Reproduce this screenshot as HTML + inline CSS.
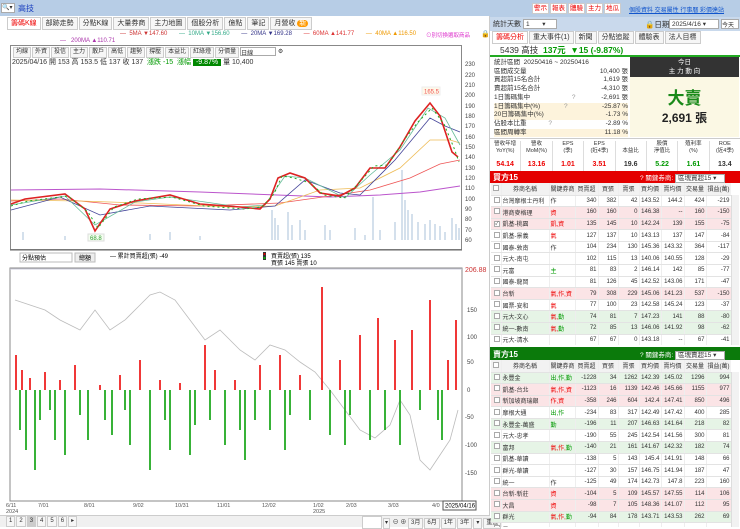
<!DOCTYPE html><html><head><meta charset="utf-8"><style>
*{box-sizing:border-box;margin:0;padding:0}
body{width:740px;height:527px;overflow:hidden;background:#fff;font-family:"Liberation Sans","Noto Sans CJK TC",sans-serif;font-size:7px;color:#333;position:relative}
.a{position:absolute}
.tab{display:inline-block;border:1px solid #ccc;background:#f6f6f6;padding:1px 3px;margin-right:1px;font-size:7px;line-height:9px}
table{border-collapse:collapse;width:240px;table-layout:fixed}
td{border-bottom:1px solid #e3e3e3;border-right:1px solid #eee;font-size:6px;height:11.6px;padding:0 1px;text-align:right;white-space:nowrap;overflow:hidden}
td:nth-child(2),td:nth-child(3){text-align:left}
tr.h td{background:#f2f2f2;text-align:center;height:12px}
tr.p td{background:#fbe4e6}tr.g td{background:#e6f4e6}
.r{color:#e00}.gr{color:#090}
.cb{display:inline-block;width:6px;height:6px;border:1px solid #aaa;background:#fff;font-size:5px;line-height:5px}
.sb{display:inline-block;border:1px solid #ccc;background:#fff;color:#e00;font-size:6.5px;line-height:9px;width:17px;text-align:center;margin-right:1px}
</style></head><body>
<div class="a" style="left:0;top:0;width:490px;height:16px;background:#b7cde6"></div>
<div class="a" style="left:1px;top:3px;width:14px;height:10px;background:#fff;border:1px solid #aaa;font-size:6px">🔍▾</div>
<div class="a" style="left:18px;top:3px;color:#1a3fbf;font-size:8px">高技</div>
<div class="a" style="left:0;top:16px;width:490px;height:499px;background:#fff;border-right:1px solid #ccc"></div>
<div class="a" style="left:7px;top:17px;white-space:nowrap"><span class="tab" style="color:#e00;background:#fff">籌碼K線</span><span class="tab">部跡走勢</span><span class="tab">分點K線</span><span class="tab">大量券商</span><span class="tab">主力地圖</span><span class="tab">個股分析</span><span class="tab">億點</span><span class="tab">筆記</span><span class="tab">月營收 <span style="background:#f90;color:#fff;border-radius:4px;padding:0 2px">新</span></span></div>
<div class="a" style="left:120px;top:31px;font-size:6px;white-space:nowrap;color:#c33">— &nbsp;5MA ▼147.60 &nbsp; &nbsp; &nbsp; <span style="color:#3a8">— &nbsp;10MA ▼156.60</span> &nbsp; &nbsp; &nbsp; <span style="color:#338">— &nbsp;20MA ▼169.28</span> &nbsp; &nbsp; &nbsp; <span style="color:#d33">— &nbsp;60MA ▲141.77</span> &nbsp; &nbsp; &nbsp; <span style="color:#e90">— &nbsp;40MA ▲116.50</span></div>
<div class="a" style="left:60px;top:38px;font-size:6px;color:#a3a">— &nbsp; 200MA ▲110.71</div>
<div class="a" style="left:426px;top:31px;font-size:5.5px;color:#d3c">⊙別切換選取商品</div>
<div class="a" style="left:481px;top:30px;font-size:7px">🔒</div>
<div class="a" style="left:10px;top:45px;width:452px;height:205px;border:1px solid #888"></div>
<div class="a" style="left:13px;top:47px;white-space:nowrap;font-size:6px"><span class="tab" style="font-size:6px;padding:0 2px">均線</span><span class="tab" style="font-size:6px;padding:0 2px">外資</span><span class="tab" style="font-size:6px;padding:0 2px">投信</span><span class="tab" style="font-size:6px;padding:0 2px">主力</span><span class="tab" style="font-size:6px;padding:0 2px">散戶</span><span class="tab" style="font-size:6px;padding:0 2px">高低</span><span class="tab" style="font-size:6px;padding:0 2px">趨勢</span><span class="tab" style="font-size:6px;padding:0 2px">撐壓</span><span class="tab" style="font-size:6px;padding:0 2px">本益比</span><span class="tab" style="font-size:6px;padding:0 2px">紅綠燈</span><span class="tab" style="font-size:6px;padding:0 2px">分價量</span><span style="display:inline-block;border:1px solid #aaa;width:36px;height:9px;vertical-align:top">日線</span> ⚙</div>
<div class="a" style="left:12px;top:57px;font-size:7px;white-space:nowrap">2025/04/16 開 153 高 153.5 低 137 收 137 &nbsp;<span class="gr">漲跌 -15 &nbsp;漲幅</span> <span style="background:#080;color:#fff;padding:0 3px">-9.87%</span> 量 10,400</div>
<svg class="a" style="left:0;top:45px" width="490" height="470" viewBox="0 45 490 470">
<g font-size="6" fill="#444"><text x="465" y="66">230</text><text x="465" y="77">220</text><text x="465" y="87">210</text><text x="465" y="97">200</text><text x="465" y="108">190</text><text x="465" y="118">180</text><text x="465" y="128">170</text><text x="465" y="139">160</text><text x="465" y="149">150</text><text x="465" y="159">140</text><text x="465" y="170">130</text><text x="465" y="180">120</text><text x="465" y="190">110</text><text x="465" y="201">100</text><text x="465" y="211">90</text><text x="465" y="221">80</text><text x="465" y="232">70</text><text x="465" y="242">60</text></g>
<g stroke="#b7cbe0" stroke-width="1.2">
<path d="M23 240V232M65 240V236M100 240V235M150 240V234M170 240V232M200 240V236M272 240V210M275 240V218M278 240V225M288 240V212M292 240V225M300 240V220M305 240V230M325 240V225M330 240V230M355 240V228M365 240V235M373 240V197M380 240V230M395 240V222M402 240V170M405 240V200M408 240V210M412 240V214M418 240V222M425 240V224M430 240V220M435 240V224M440 240V226M445 240V232M452 240V218M456 240V224M459 240V228"/></g>
<path d="M11 190L100 189L200 192L330 197L380 195L420 192L460 186" fill="none" stroke="#b5c" stroke-width="1"/>
<path d="M11 201L60 199L120 205L200 206L280 203L330 196L370 190L410 178L440 164L460 160" fill="none" stroke="#e55" stroke-width="0.8"/>
<path d="M11 200L80 201L140 203L230 207L275 206L320 190L360 188L400 168L430 140L450 140L460 143" fill="none" stroke="#eb5" stroke-width="0.8"/>
<path d="M11 210L60 197L100 215L150 206L230 210L275 206L305 180L340 193L360 195L395 160L430 118L445 126L460 132" fill="none" stroke="#449" stroke-width="0.8"/>
<path d="M11 205L65 196L95 225L135 202L170 197L240 207L265 205L285 176L305 178L345 198L370 175L400 150L428 108L445 118L460 145" fill="none" stroke="#6b9" stroke-width="0.8"/>
<path d="M11 204L25 199L65 194L85 209L95 231L110 209L135 201L170 195L200 204L240 207L260 209L270 199L278 178L290 173L305 178L320 193L340 196L355 188L370 168L385 168L400 147L415 121L430 103L440 116L452 152L458 157" fill="none" stroke="#d22" stroke-width="1.6"/>
<path d="M11 206L28 201L68 196L88 212L98 228L114 207L138 199L172 197L204 206L244 209L262 207L274 194L282 176L294 178L310 183L324 195L344 198L358 184L374 166L388 165L404 140L418 122L432 108L444 124L454 148L459 162" fill="none" stroke="#2a2" stroke-width="1" stroke-dasharray="2 3"/>
<rect x="422" y="87" width="18" height="8" fill="#fff8e8" stroke="#eee"/><text x="424" y="93.5" font-size="6" fill="#e55">165.5</text>
<rect x="88" y="234" width="16" height="7" fill="#f4fff0" stroke="#ddd"/><text x="90" y="240" font-size="6" fill="#393">68.8</text>
<line x1="10" y1="250" x2="462" y2="250" stroke="#666"/>
<rect x="20" y="253" width="52" height="9" fill="#fff" stroke="#bbb"/><text x="22" y="260" font-size="6">分點預估</text>
<rect x="75" y="253" width="20" height="9" fill="#eee" stroke="#bbb"/><text x="79" y="260" font-size="6">總額</text>
<text x="110" y="258" font-size="6">— 累計買賣超(張) -49</text>
<rect x="263" y="252" width="3" height="8" fill="#333"/><circle cx="264.5" cy="254" r="1" fill="#e00"/><circle cx="264.5" cy="258" r="1" fill="#0c0"/>
<text x="271" y="258" font-size="6">買賣超(張) 135</text><text x="271" y="265" font-size="6">買張 145 賣張 10</text>
<rect x="10" y="268" width="452" height="233" fill="none" stroke="#888"/>
<line x1="10" y1="269" x2="462" y2="269" stroke="#ccd" />
<g font-size="6" fill="#444"><text x="465" y="272" fill="#c33" font-size="7">206.88</text><text x="467" y="312">150</text><text x="467" y="339">100</text><text x="467" y="364">50</text><text x="467" y="392">0</text><text x="465" y="419">-50</text><text x="465" y="447">-100</text><text x="465" y="475">-150</text></g>
<path d="M15 300L30 305L45 310L60 320L80 330L95 310L110 330L125 320L140 305L150 295L160 292L175 300L190 320L205 340L220 330L240 350L255 360L270 345L285 350L300 362L315 372L330 390L345 410L360 430L375 438L390 425L400 400L410 415L420 460L430 470L440 455L450 440L458 410" fill="none" stroke="#bbb" stroke-width="0.8"/>
<path d="M16 390V355M22 390V370M30 390V378M45 390V372M60 390V380M75 390V365M100 390V385M120 390V375M140 390V360M160 390V380M180 390V383M205 390V345M215 390V370M235 390V380M260 390V365M280 390V355M300 390V375M322 390V287M340 390V360M360 390V335M378 390V318M395 390V340M412 390V330M430 390V300M448 390V360M456 390V320" stroke="#e22" stroke-width="1.8"/>
<path d="M20 390V430M26 390V450M35 390V470M40 390V420M50 390V410M55 390V440M65 390V455M80 390V415M88 390V440M105 390V420M112 390V435M125 390V410M130 390V445M150 390V470M165 390V420M170 390V450M190 390V455M195 390V425M210 390V420M225 390V445M240 390V430M245 390V460M255 390V420M270 390V430M285 390V450M290 390V415M310 390V420M330 390V435M345 390V445M350 390V415M370 390V440M385 390V430M400 390V445M420 390V410M438 390V420M442 390V440" stroke="#2a2" stroke-width="1.8"/>
<g font-size="5.5" fill="#555"><text x="6" y="507">6/11</text><text x="6" y="513">2024</text><text x="38" y="507">7/01</text><text x="84" y="507">8/01</text><text x="133" y="507">9/02</text><text x="175" y="507">10/31</text><text x="217" y="507">11/01</text><text x="262" y="507">12/02</text><text x="313" y="507">1/02</text><text x="313" y="513">2025</text><text x="346" y="507">2/03</text><text x="388" y="507">3/03</text><text x="432" y="507">4/0</text></g>
<rect x="443" y="501" width="33" height="9" fill="#fff" stroke="#555"/><text x="445" y="507.5" font-size="6">2025/04/16</text>
</svg>
<div class="a" style="left:0;top:515px;width:490px;height:12px;background:#f0f0f0;border-top:1px solid #ccc"></div>
<div class="a" style="left:6px;top:516px;font-size:6px;white-space:nowrap"><span class="tab" style="font-size:6px;padding:0 2px">1</span><span class="tab" style="font-size:6px;padding:0 2px">2</span><span class="tab" style="font-size:6px;padding:0 2px;background:#ccc">3</span><span class="tab" style="font-size:6px;padding:0 2px">4</span><span class="tab" style="font-size:6px;padding:0 2px">5</span><span class="tab" style="font-size:6px;padding:0 2px">6</span><span class="tab" style="font-size:6px;padding:0 2px">▸</span></div>
<div class="a" style="left:362px;top:516px;font-size:6px;white-space:nowrap"><span class="tab" style="width:20px;background:#fff">&nbsp;</span><span class="tab" style="font-size:6px;padding:0 1px">▾</span> ⊖ ⊕ <span class="tab" style="font-size:6px;padding:0 2px">3月</span><span class="tab" style="font-size:6px;padding:0 2px">6月</span><span class="tab" style="font-size:6px;padding:0 2px">1年</span><span class="tab" style="font-size:6px;padding:0 2px">3年</span><span class="tab" style="font-size:6px;padding:0 2px">▾</span><span class="tab" style="font-size:6px;padding:0 2px">重置</span></div>
<!-- right panel -->
<div class="a" style="left:490px;top:0;width:250px;height:17px;background:#b7cde6"></div>
<div class="a" style="left:532px;top:3px;white-space:nowrap"><span class="sb">警示</span><span class="sb">報表</span><span class="sb">體驗</span><span class="sb">主力</span><span class="sb">地瓜</span></div>
<div class="a" style="left:629px;top:5px;font-size:6px;color:#15c;text-decoration:underline;white-space:nowrap">個股資料 交易屬性 行事曆 彩價達站</div>
<div class="a" style="left:490px;top:17px;width:250px;height:14px;background:#c9d9ec"></div>
<div class="a" style="left:493px;top:19px;font-size:7px">統計天數</div>
<div class="a" style="left:523px;top:19px;width:34px;height:10px;background:#fff;border:1px solid #aaa;font-size:6.5px;padding-left:2px">1 &nbsp; &nbsp; &nbsp; ▾</div>
<div class="a" style="left:645px;top:19px;font-size:7.5px">🔒日期</div>
<div class="a" style="left:669px;top:19px;width:50px;height:10px;background:#fff;border:1px solid #aaa;font-size:6.5px;padding-left:2px">2025/4/16 ▾</div>
<div class="a" style="left:721px;top:19px;width:18px;height:10px;background:#fff;border:1px solid #aaa;font-size:6px">今天</div>
<div class="a" style="left:492px;top:31px;white-space:nowrap"><span class="tab" style="color:#e00;background:#fff">籌碼分析</span><span class="tab">重大事件(1)</span><span class="tab">新聞</span><span class="tab">分點追蹤</span><span class="tab">體驗表</span><span class="tab">法人目標</span></div>
<div class="a" style="left:490px;top:43px;width:250px;height:14px;border-bottom:2px solid #2a2"></div>
<div class="a" style="left:500px;top:44px;font-size:8.5px;white-space:nowrap">5439 高技 &nbsp;<b class="gr">137元 &nbsp;▼15 (-9.87%)</b></div>
<div class="a" style="left:494px;top:59px;width:134px;font-size:6.5px;line-height:8.7px">
<div>統計區間 &nbsp;20250416 ~ 20250416</div>
<div>區間成交量<span style="float:right">10,400 張</span></div>
<div>買超前15名合計<span style="float:right">1,619 張</span></div>
<div>賣超前15名合計<span style="float:right">-4,310 張</span></div>
<div>1日籌碼集中 <span style="margin-left:40px;color:#999">?</span><span style="float:right">-2,691 張</span></div>
<div style="background:#fdf3dc">1日籌碼集中(%) <span style="margin-left:22px;color:#999">?</span><span style="float:right">-25.87 %</span></div>
<div style="background:#fdf3dc">20日籌碼集中(%)<span style="float:right">-1.73 %</span></div>
<div>佔股本比重 <span style="margin-left:20px;color:#999">?</span><span style="float:right">-2.89 %</span></div>
<div style="background:#fdf3dc">區間周轉率<span style="float:right">11.18 %</span></div></div>
<div class="a" style="left:630px;top:57px;width:109px;height:20px;background:#333;color:#fff;text-align:center;font-size:6.5px;line-height:9px;padding-top:1px">今日<br>主 力 動 向</div>
<div class="a" style="left:630px;top:77px;width:109px;height:60px;background:#fbf8e4;text-align:center"><div style="color:#1a8a1a;font-size:17px;font-weight:bold;margin-top:7px">大賣</div><div style="font-size:12px;font-weight:bold;color:#222">2,691 張</div></div>
<div class="a" style="left:490px;top:138px;width:250px;height:33px;border-top:1px solid #ccc;display:flex;font-size:5.5px;text-align:center;line-height:7px;padding-top:2px">
<div style="flex:1;border-right:1px solid #ddd">營收年增<br>YoY(%)<div class="r" style="font-size:7px;font-weight:bold;margin-top:6px">54.14</div></div><div style="flex:1;border-right:1px solid #ddd">營收<br>MoM(%)<div class="r" style="font-size:7px;font-weight:bold;margin-top:6px">13.16</div></div><div style="flex:1;border-right:1px solid #ddd">EPS<br>(季)<div class="r" style="font-size:7px;font-weight:bold;margin-top:6px">1.01</div></div><div style="flex:1;border-right:1px solid #ddd">EPS<br>(近4季)<div class="r" style="font-size:7px;font-weight:bold;margin-top:6px">3.51</div></div><div style="flex:1;border-right:1px solid #ddd"><br>本益比<div style="font-size:7px;font-weight:bold;margin-top:6px">19.6</div></div><div style="flex:1;border-right:1px solid #ddd">股價<br>淨值比<div class="gr" style="font-size:7px;font-weight:bold;margin-top:6px">5.22</div></div><div style="flex:1;border-right:1px solid #ddd">殖利率<br>(%)<div class="gr" style="font-size:7px;font-weight:bold;margin-top:6px">1.61</div></div><div style="flex:1">ROE<br>(近4季)<div style="font-size:7px;font-weight:bold;margin-top:6px">13.4</div></div></div>
<div class="a" style="left:490px;top:171px;width:250px;height:12px;background:#e40000;color:#fff;font-size:8px;font-weight:bold;padding:1px 3px">買方15<span style="position:absolute;left:150px;top:1px;font-size:6.5px;font-weight:normal">? 關鍵券商: <span style="background:#fff;color:#333;padding:0 8px 0 2px;border:1px solid #aaa">區塊買超15 ▾</span></span></div>
<div class="a" style="left:491px;top:183px;width:240px;height:162px;overflow:hidden"><table>
<colgroup><col style="width:10px"><col style="width:48px"><col style="width:26px"><col style="width:23px"><col style="width:20px"><col style="width:21px"><col style="width:22px"><col style="width:23px"><col style="width:22px"><col style="width:25px"></colgroup>
<tr class="h"><td><span class="cb"></span></td><td style="text-align:center">券商名稱</td><td style="text-align:center">關鍵券商</td><td>買賣超</td><td>買張</td><td>賣張</td><td>買均價</td><td>賣均價</td><td>交易量</td><td>損益(萬)</td></tr>
<tr><td><span class="cb"></span></td><td>台灣摩根士丹利</td><td>作</td><td>340</td><td>382</td><td>42</td><td>143.52</td><td>144.2</td><td>424</td><td>-219</td></tr>
<tr class="p"><td><span class="cb"></span></td><td>港商麥格理</td><td class="r">資</td><td>160</td><td>160</td><td>0</td><td>146.38</td><td>--</td><td>160</td><td>-150</td></tr>
<tr class="p"><td><span class="cb">✓</span></td><td>凱基-桃園</td><td class="r">凱,資</td><td>135</td><td>145</td><td>10</td><td>142.24</td><td>139</td><td>155</td><td>-75</td></tr>
<tr><td><span class="cb"></span></td><td>凱基-景義</td><td class="r">氣</td><td>127</td><td>137</td><td>10</td><td>143.13</td><td>137</td><td>147</td><td>-84</td></tr>
<tr><td><span class="cb"></span></td><td>國泰-敦南</td><td>作</td><td>104</td><td>234</td><td>130</td><td>145.36</td><td>143.32</td><td>364</td><td>-117</td></tr>
<tr><td><span class="cb"></span></td><td>元大-南屯</td><td></td><td>102</td><td>115</td><td>13</td><td>140.06</td><td>140.55</td><td>128</td><td>-29</td></tr>
<tr><td><span class="cb"></span></td><td>元富</td><td class="gr">主</td><td>81</td><td>83</td><td>2</td><td>146.14</td><td>142</td><td>85</td><td>-77</td></tr>
<tr><td><span class="cb"></span></td><td>國泰-龍岡</td><td></td><td>81</td><td>126</td><td>45</td><td>142.52</td><td>143.06</td><td>171</td><td>-47</td></tr>
<tr class="p"><td><span class="cb"></span></td><td>台新</td><td class="r">氣,作,資</td><td>79</td><td>308</td><td>229</td><td>145.06</td><td>141.23</td><td>537</td><td>-150</td></tr>
<tr><td><span class="cb"></span></td><td>國票-安和</td><td class="r">氣</td><td>77</td><td>100</td><td>23</td><td>142.58</td><td>145.24</td><td>123</td><td>-37</td></tr>
<tr class="g"><td><span class="cb"></span></td><td>元大-文心</td><td class="r">氣,<span class="gr">勤</span></td><td>74</td><td>81</td><td>7</td><td>147.23</td><td>141</td><td>88</td><td>-80</td></tr>
<tr class="g"><td><span class="cb"></span></td><td>統一-數南</td><td class="r">氣,<span class="gr">勤</span></td><td>72</td><td>85</td><td>13</td><td>146.06</td><td>141.92</td><td>98</td><td>-62</td></tr>
<tr><td><span class="cb"></span></td><td>元大-清水</td><td></td><td>67</td><td>67</td><td>0</td><td>143.18</td><td>--</td><td>67</td><td>-41</td></tr>
</table></div>
<div class="a" style="left:731px;top:195px;width:8px;height:150px;background:#f2f2f2;border-left:1px solid #ddd"></div>
<div class="a" style="left:490px;top:347px;width:250px;height:13px;background:#0b7a0b;color:#fff;font-size:8px;font-weight:bold;padding:2px 3px">賣方15<span style="position:absolute;left:150px;top:2px;font-size:6.5px;font-weight:normal">? 關鍵券商: <span style="background:#fff;color:#333;padding:0 8px 0 2px;border:1px solid #aaa">區塊賣超15 ▾</span></span></div>
<div class="a" style="left:491px;top:360px;width:240px;height:167px;overflow:hidden"><table>
<colgroup><col style="width:10px"><col style="width:48px"><col style="width:26px"><col style="width:23px"><col style="width:20px"><col style="width:21px"><col style="width:22px"><col style="width:23px"><col style="width:22px"><col style="width:25px"></colgroup>
<tr class="h"><td><span class="cb"></span></td><td style="text-align:center">券商名稱</td><td style="text-align:center">關鍵券商</td><td>買賣超</td><td>買張</td><td>賣張</td><td>買均價</td><td>賣均價</td><td>交易量</td><td>損益(萬)</td></tr>
<tr class="g"><td><span class="cb"></span></td><td>永豐金</td><td class="gr">出,作,勤</td><td>-1228</td><td>34</td><td>1262</td><td>142.39</td><td>145.02</td><td>1296</td><td>994</td></tr>
<tr class="p"><td><span class="cb"></span></td><td>凱基-台北</td><td class="r">氣,作,資</td><td>-1123</td><td>16</td><td>1139</td><td>142.46</td><td>145.66</td><td>1155</td><td>977</td></tr>
<tr class="p"><td><span class="cb"></span></td><td>新加坡商瑞銀</td><td class="r">作,資</td><td>-358</td><td>246</td><td>604</td><td>142.4</td><td>147.41</td><td>850</td><td>496</td></tr>
<tr><td><span class="cb"></span></td><td>摩根大通</td><td class="gr">出,作</td><td>-234</td><td>83</td><td>317</td><td>142.49</td><td>147.42</td><td>400</td><td>285</td></tr>
<tr class="g"><td><span class="cb"></span></td><td>永豐金-萬盛</td><td class="gr">勤</td><td>-196</td><td>11</td><td>207</td><td>146.63</td><td>141.64</td><td>218</td><td>82</td></tr>
<tr><td><span class="cb"></span></td><td>元大-忠孝</td><td></td><td>-190</td><td>55</td><td>245</td><td>142.54</td><td>141.56</td><td>300</td><td>81</td></tr>
<tr class="g"><td><span class="cb"></span></td><td>富邦</td><td class="r">氣,作,<span class="gr">勤</span></td><td>-140</td><td>21</td><td>161</td><td>141.67</td><td>142.32</td><td>182</td><td>74</td></tr>
<tr><td><span class="cb"></span></td><td>凱基-華讀</td><td></td><td>-138</td><td>5</td><td>143</td><td>145.4</td><td>141.91</td><td>148</td><td>66</td></tr>
<tr><td><span class="cb"></span></td><td>群光-華讀</td><td></td><td>-127</td><td>30</td><td>157</td><td>146.75</td><td>141.94</td><td>187</td><td>47</td></tr>
<tr><td><span class="cb"></span></td><td>統一</td><td>作</td><td>-125</td><td>49</td><td>174</td><td>142.73</td><td>147.8</td><td>223</td><td>160</td></tr>
<tr class="p"><td><span class="cb"></span></td><td>台新-新莊</td><td class="r">資</td><td>-104</td><td>5</td><td>109</td><td>145.57</td><td>147.55</td><td>114</td><td>106</td></tr>
<tr class="p"><td><span class="cb"></span></td><td>大昌</td><td class="r">資</td><td>-98</td><td>7</td><td>105</td><td>148.36</td><td>141.07</td><td>112</td><td>95</td></tr>
<tr class="g"><td><span class="cb"></span></td><td>群光</td><td class="r">氣,作,<span class="gr">勤</span></td><td>-94</td><td>84</td><td>178</td><td>143.71</td><td>143.53</td><td>262</td><td>69</td></tr>
<tr><td><span class="cb"></span></td><td>元</td><td></td><td></td><td></td><td></td><td></td><td></td><td></td><td></td></tr>
</table></div>
<div class="a" style="left:731px;top:372px;width:8px;height:155px;background:#f2f2f2;border-left:1px solid #ddd"></div>
</body></html>
